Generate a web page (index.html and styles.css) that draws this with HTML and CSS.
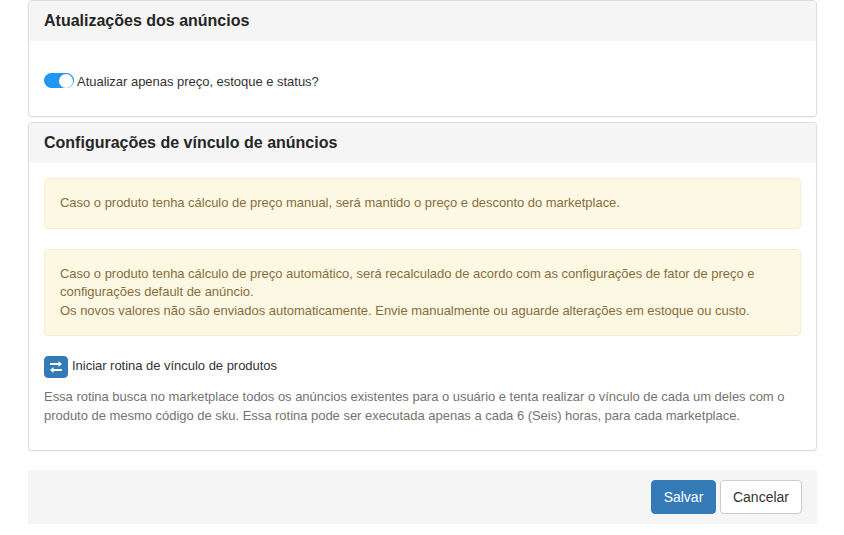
FILE: index.html
```html
<!DOCTYPE html>
<html lang="pt-BR">
<head>
<meta charset="utf-8">
<title>Configurações</title>
<link rel="stylesheet" href="styles.css">
</head>
<body>
<main class="page">
  <section class="panel panel-updates">
    <header class="panel-heading"><h3>Atualizações dos anúncios</h3></header>
    <div class="panel-body updates-body">
      <label class="toggle-row">
        <span class="switch"><span class="knob"></span></span>
        <span class="toggle-label">Atualizar apenas preço, estoque e status?</span>
      </label>
    </div>
  </section>
  <section class="panel panel-link">
    <header class="panel-heading"><h3>Configurações de vínculo de anúncios</h3></header>
    <div class="panel-body link-body">
      <div class="alert">Caso o produto tenha cálculo de preço manual, será mantido o preço e desconto do marketplace.</div>
      <div class="alert">Caso o produto tenha cálculo de preço automático, será recalculado de acordo com as configurações de fator de preço e configurações default de anúncio.<br>Os novos valores não são enviados automaticamente. Envie manualmente ou aguarde alterações em estoque ou custo.</div>
      <div class="routine-row">
        <button class="icon-btn" type="button" aria-label="Iniciar">
          <svg width="14" height="12" viewBox="0 0 14 12" aria-hidden="true"><path fill="#fff" d="M1 1.9h8.5V0l3.5 3-3.5 3V4.1H1zM13 7.9H4.5V6L1 9l3.5 3v-1.9H13z"/></svg>
        </button>
        <span class="routine-label">Iniciar rotina de vínculo de produtos</span>
      </div>
      <p class="help">Essa rotina busca no marketplace todos os anúncios existentes para o usuário e tenta realizar o vínculo de cada um deles com o produto de mesmo código de sku. Essa rotina pode ser executada apenas a cada 6 (Seis) horas, para cada marketplace.</p>
    </div>
  </section>
  <footer class="actions">
    <button class="btn btn-primary" type="button">Salvar</button>
    <button class="btn btn-default" type="button">Cancelar</button>
  </footer>
</main>
</body>
</html>
```
FILE: styles.css
```css
* { box-sizing: border-box; }
html, body { margin: 0; padding: 0; background: #fff; }
body {
  font-family: "Liberation Sans", Arial, sans-serif;
  font-size: 13px;
  line-height: 1.42857;
  letter-spacing: -0.025px;
  color: #333;
  height: 535px;
  overflow: hidden;
}
.page { padding: 0 27px 0 28px; }
.panel {
  background: #fff;
  border: 1px solid #ddd;
  border-radius: 4px;
  box-shadow: 0 1px 1px rgba(0, 0, 0, .05);
  overflow: hidden;
}
.panel-updates { height: 117px; }
.panel-link { height: 329px; margin-top: 5px; }
.panel-heading {
  background: #f5f5f5;
  height: 40px;
  padding: 0 15px;
  display: flex;
  align-items: center;
}
.panel-heading h3 {
  margin: 0;
  font-size: 16px;
  font-weight: 700;
  letter-spacing: 0;
  color: #262626;
}
.updates-body { padding: 30px 15px 0; }
.toggle-row { display: flex; align-items: center; gap: 3px; height: 20px; }
.toggle-label { margin-top: 2px; }
.switch {
  width: 30px;
  height: 15px;
  margin-bottom: 1px;
  border-radius: 8px;
  background: #2196f3;
  display: flex;
  justify-content: flex-end;
  align-items: center;
  padding-right: 1px;
}
.knob { width: 14px; height: 14px; border-radius: 50%; background: #fff; }
.link-body { padding: 15px; }
.alert {
  background: #fcf8e3;
  border: 1px solid #faebcc;
  border-radius: 4px;
  color: #8a6d3b;
  padding: 15px;
  margin-bottom: 20px;
}
.routine-row { display: flex; align-items: center; gap: 4px; height: 22px; }
.routine-label { margin-bottom: 2px; }
.icon-btn {
  width: 24px;
  height: 22px;
  padding: 0;
  border: 1px solid #337ab7;
  border-radius: 4px;
  background: #337ab7;
  display: flex;
  align-items: center;
  justify-content: center;
}
.help { margin: 10px 0 0; color: #737373; }
.actions {
  margin-top: 19px;
  height: 54px;
  background: #f5f5f5;
  display: flex;
  justify-content: flex-end;
  align-items: center;
  gap: 4px;
  padding-right: 15px;
}
.btn {
  height: 34px;
  padding: 6px 12px;
  font-family: inherit;
  font-size: 14px;
  line-height: 20px;
  letter-spacing: 0;
  border: 1px solid transparent;
  border-radius: 4px;
}
.btn-primary { width: 65px; padding: 6px 0; background: #337ab7; border-color: #337ab7; color: #fff; }
.btn-default { background: #fff; border-color: #ccc; color: #333; }
```
